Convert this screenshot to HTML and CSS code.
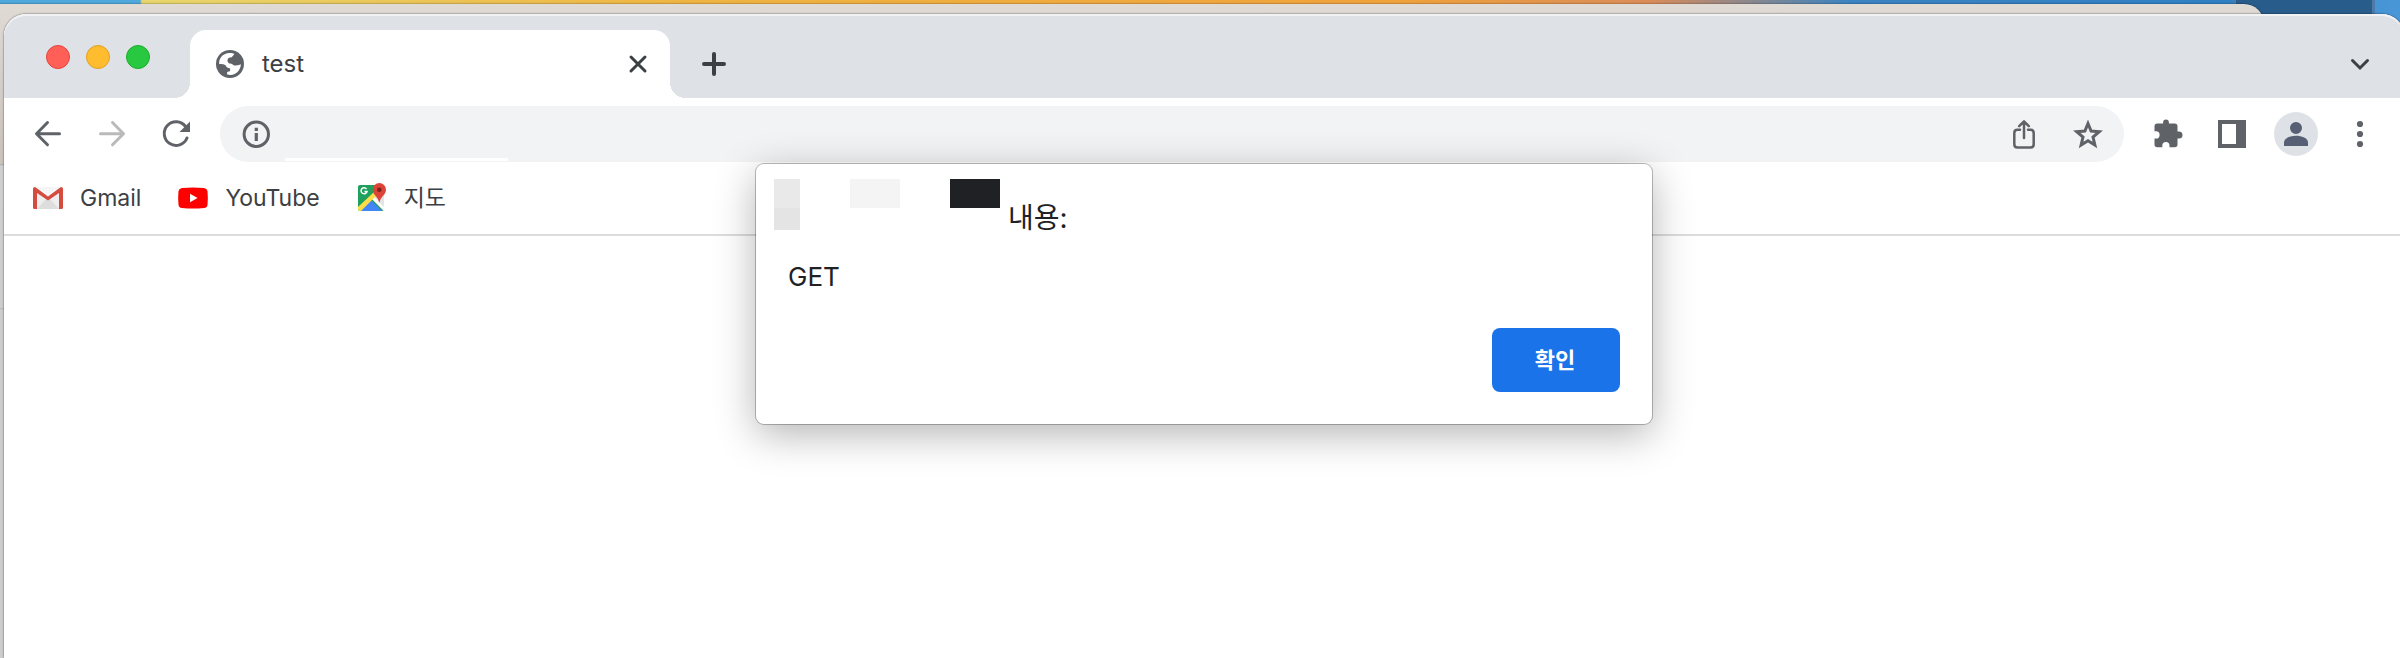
FILE: index.html
```html
<!DOCTYPE html>
<html lang="ko">
<head>
<meta charset="utf-8">
<title>test</title>
<link rel="stylesheet" href="styles.css">
</head>
<body>
<div class="desktop">
  <div class="dock-tile"></div>
  <div class="back-window"></div>
  <div class="window">
    <header class="tabstrip">
      <div class="lights">
        <button class="light red" aria-label="닫기"></button>
        <button class="light yellow" aria-label="최소화"></button>
        <button class="light green" aria-label="확대"></button>
      </div>
      <div class="tab">
        <svg class="globe" viewBox="0 0 28 28"><circle cx="14" cy="14" r="14" fill="#5f6368"/><path fill="#fff" d="M3.200 11.500C4.300 6.500 8.500 3.200 13 3.100C15 3 17 3.200 18.300 3.800C17.500 6 16 6.500 15.800 7.200C13 7.200 11.400 8.300 11.400 10.600C11.400 11.600 12.500 12 12.400 13C13.500 14 15 13 16.400 14.200C18.200 15.800 19 15.400 20 15.400C22 15.300 23.500 15 24.900 14.200C24.700 20 20.300 24.600 14.500 24.900C12.500 25 11.800 24.700 11 24.300L11.200 22.200C12 21.400 13.900 21.800 14.200 20.600C14.500 18.500 13.300 17.800 12 17.800C10.500 17.800 10.600 16.500 9.500 15.300C8.500 14.200 6.500 14.200 3.200 14Z"/></svg>
        <span class="tab-title">test</span>
        <button class="icon-btn" aria-label="탭 닫기"><svg viewBox="0 0 40 40" class="dark"><path d="M13 13 27 27M27 13 13 27" stroke-width="3"/></svg></button>
      </div>
      <button class="icon-btn new-tab" aria-label="새 탭"><svg viewBox="0 0 40 40" class="dark"><path d="M20 10V30M10 20H30" stroke-width="4"/></svg></button>
      <button class="icon-btn tab-search" aria-label="탭 검색"><svg viewBox="0 0 40 40" class="dark"><path d="M12.500 16.500 20 24 27.500 16.500" stroke-width="3"/></svg></button>
    </header>
    <nav class="toolbar">
      <button class="icon-btn" aria-label="뒤로"><svg viewBox="0 0 40 40" class="line"><path d="M31.500 19.700H9M19.500 8.500 8.500 19.700 19.500 30.800"/></svg></button>
      <button class="icon-btn" aria-label="앞으로"><svg viewBox="0 0 40 40" class="line faded"><path d="M8.500 19.700H31M20.500 8.500 31.500 19.700 20.500 30.800"/></svg></button>
      <button class="icon-btn" aria-label="새로고침"><svg viewBox="0 0 40 40" class="line"><path d="M29.500 12.500A11.800 11.800 0 1 0 31 24"/><path class="solid" d="M34 7.500V18H23.500Z"/></svg></button>
      <div class="omnibox">
        <button class="icon-btn" aria-label="사이트 정보"><svg viewBox="0 0 40 40" class="line"><circle cx="20.300" cy="20.300" r="12.200"/><path class="solid" d="M18.700 13.700h3.200v3.200h-3.200zM18.700 19h3.200v8h-3.200z"/></svg></button>
        <input class="address" type="text" aria-label="주소창">
        <button class="icon-btn" aria-label="공유"><svg viewBox="0 0 40 40" class="line share"><path d="M16 15.800H13.500Q10.300 15.800 10.300 19V30.200Q10.300 33.500 13.500 33.500H26.500Q29.700 33.500 29.700 30.200V19Q29.700 15.800 26.500 15.800H24M20 24V8M15.200 12.200 20 7.400 24.800 12.200"/></svg></button>
        <button class="icon-btn" aria-label="북마크 추가"><svg viewBox="0 0 40 40" class="line"><path class="miter" d="M20 9.500 23.100 17.100 31.200 17.700 25 23 26.900 31 20 26.700 13.100 31 15 23 8.800 17.700 16.900 17.100Z"/></svg></button>
        <span class="redaction"></span>
      </div>
      <button class="icon-btn" aria-label="확장 프로그램"><svg viewBox="0 0 40 40"><path class="solid" d="M31 17.500H29.500V12.300Q29.500 9.500 26.700 9.500H20.900V8.500A2.900 2.900 0 0 0 15.100 8.500V9.500H9.300Q6.500 9.500 6.500 12.300V17.300H8A3.600 3.600 0 0 1 8 24.500H6.500V30.500Q6.500 33.300 9.300 33.300H14.300V31.500A3.600 3.600 0 0 1 21.500 31.500V33.300H26.700Q29.500 33.300 29.500 30.500V24.500H31A3.500 3.500 0 0 0 31 17.500Z"/></svg></button>
      <button class="icon-btn" aria-label="측면 패널"><svg viewBox="0 0 40 40"><path class="solid" fill-rule="evenodd" d="M6 6H34V34H6ZM10 10V30H24V10Z"/></svg></button>
      <button class="icon-btn" aria-label="프로필"><svg viewBox="0 0 40 40"><circle cx="20" cy="20" r="22" fill="#dee1e6"/><path fill="#565f73" d="M20 8a6 6 0 0 1 0 12a6 6 0 0 1 0-12M8 32V28.500C8 24 14.500 21.800 20 21.800S32 24 32 28.500V32Z"/></svg></button>
      <button class="icon-btn" aria-label="메뉴"><svg viewBox="0 0 40 40"><g class="solid"><circle cx="20" cy="10" r="3.100"/><circle cx="20" cy="20" r="3.100"/><circle cx="20" cy="30" r="3.100"/></g></svg></button>
    </nav>
    <nav class="bookmarks">
      <a href="#"><svg viewBox="0 0 30 30"><path fill="#eee" d="M2 4H28V26H2Z"/><path fill="#ddd" d="M4 26 15 14 26 26Z"/><path fill="#f5f5f5" d="M3 4H27L15 14Z"/><path fill="#d54b3d" d="M0 6Q0 4 2 4L15 13.500 28 4Q30 4 30 6V24.500Q30 26 28.500 26H26V10L15 17.500 4 10V26H1.500Q0 26 0 24.500Z"/></svg>Gmail</a>
      <a href="#"><svg viewBox="0 0 30 30"><path fill="#f00" d="M4 5Q15 3.800 26 5Q29 5.300 29.500 8Q30.200 15 29.500 22Q29 24.800 26 25Q15 26.200 4 25Q1 24.800 .5 22Q-.2 15 .5 8Q1 5.300 4 5Z"/><path fill="#fff" d="M12 10.700 19.500 15 12 19.300Z"/></svg>YouTube</a>
      <a href="#"><svg viewBox="0 0 30 30"><rect x="1" y="2" width="26" height="26" rx="2" fill="#1fa05c"/><path fill="#e4e4e4" d="M27 28V6L14 15 27 28"/><path fill="#fff" d="M14 15 27 28V24L16 13Z"/><path fill="#4285f4" d="M3 28 14 17 25 28Z"/><path fill="#ffdc48" d="M1 24 17 9 20 12 4 28H3Q1 28 1 26Z"/><path d="M9.500 6A3 3 0 1 0 10 8.500H7.500" fill="none" stroke="#fff" stroke-width="1.500"/><path fill="#db4437" d="M22.300 0A6.700 6.700 0 0 1 29 6.700C29 12 23.500 13 22.300 20C21 13 15.700 12 15.700 6.700A6.700 6.700 0 0 1 22.300 0"/><circle cx="22.300" cy="6.700" r="2.300" fill="#7b231c"/></svg>지도</a>
    </nav>
    <main class="page"></main>
    <section class="alert" role="alertdialog" aria-labelledby="alert-title" aria-describedby="alert-text">
      <div class="alert-head">
        <div class="mask" aria-hidden="true"><i class="m1"></i><i class="m2"></i><i class="m3"></i></div>
        <h1 id="alert-title">내용:</h1>
      </div>
      <p id="alert-text">GET</p>
      <div class="actions"><button class="ok">확인</button></div>
    </section>
  </div>
</div>
</body>
</html>
```
FILE: styles.css
```css
* { box-sizing: border-box; }
html, body { height: 100%; margin: 0; }
body {
  font-family: Inter, "Noto Sans CJK KR", sans-serif;
  color: #3c4043;
  overflow: hidden;
}
button { border: 0; padding: 0; background: none; font: inherit; }
svg { display: block; overflow: visible; }

.desktop {
  position: relative;
  display: flex;
  height: 100%;
  padding: 14px 0 0 4px;
  overflow: hidden;
  background: linear-gradient(90deg, #4fa9dc 0, #4fa9dc 140px, #e8d66e 142px, #efb441 700px, #f0a23c 1400px, #d98c5a 1650px, #3b83c2 1850px, #2f80c4 2230px, #4a97d8 2400px);
}
.dock-tile {
  position: absolute;
  top: 0;
  right: 25px;
  width: 142px;
  height: 40px;
  background: #285d8b;
  border: solid #4b7ba6;
  border-width: 0 3px;
}
.back-window {
  position: absolute;
  top: 4px;
  left: -20px;
  right: 136px;
  bottom: 0;
  border-radius: 0 20px 0 0;
  background: linear-gradient(#dfdad4 0, #c9c2bb 160px, #aaa 160px, #d0d0d0 162px, #cdcdcd 304px, #b4b4b4 304px, #cdcdcd 306px);
  box-shadow: 0 0 2px rgba(0, 0, 0, .6);
}
.window {
  position: relative;
  flex: 1;
  display: flex;
  flex-direction: column;
  margin-right: -4px;
  border-radius: 22px 22px 0 0;
  background: #fff;
  box-shadow: 0 0 2px rgba(0, 0, 0, .7);
}

.tabstrip {
  display: flex;
  align-items: flex-end;
  padding: 16px 24px 0;
  border-radius: 22px 22px 0 0;
  background: #dee1e6;
  box-shadow: inset 0 2px 0 #f0f2f4;
}
.lights {
  display: flex;
  gap: 16px;
  width: 162px;
  padding-left: 18px;
  align-self: flex-start;
  margin-top: 15px;
}
.light { width: 24px; height: 24px; border-radius: 50%; border: 1px solid; }
.red { background: #ff5f57; border-color: #e2463f; }
.yellow { background: #febc2e; border-color: #e0a123; }
.green { background: #28c840; border-color: #1dad2b; }
.tab {
  position: relative;
  display: flex;
  align-items: center;
  width: 480px;
  height: 68px;
  padding: 0 12px 0 26px;
  border-radius: 16px 16px 0 0;
  background: #fff;
}
.tab::before, .tab::after {
  content: "";
  position: absolute;
  bottom: 0;
  width: 16px;
  height: 16px;
}
.tab::before { right: 100%; background: radial-gradient(circle at 0 0, transparent 16px, #fff 16px); }
.tab::after { left: 100%; background: radial-gradient(circle at 100% 0, transparent 16px, #fff 16px); }
.globe { width: 28px; height: 28px; margin-right: 18px; }
.tab-title { flex: 1; font-size: 24px; line-height: 28px; }
.icon-btn { flex: none; width: 40px; height: 40px; color: #5f6368; }
.icon-btn svg { width: 40px; height: 40px; }
.new-tab { margin: 0 0 14px 24px; }
.tab-search { margin: 0 0 14px auto; }
.dark { fill: none; stroke: #3c4043; stroke-linecap: round; }
.line { fill: none; stroke: #5f6368; stroke-width: 3; stroke-linecap: round; stroke-linejoin: round; }
.share { stroke-width: 2.5; }
.faded { stroke: #bababa; }
.miter { stroke-linejoin: miter; }
.solid { fill: #5f6368; stroke: none; }

.toolbar {
  display: flex;
  align-items: center;
  gap: 24px;
  padding: 8px 24px 0;
}
.omnibox {
  position: relative;
  flex: 1;
  display: flex;
  align-items: center;
  gap: 24px;
  height: 56px;
  padding: 0 16px;
  border-radius: 28px;
  background: #f1f3f4;
}
.address {
  flex: 1;
  min-width: 0;
  border: 0;
  outline: 0;
  background: none;
  font: inherit;
  font-size: 26px;
}
.redaction {
  position: absolute;
  left: 65px;
  bottom: 1px;
  width: 223px;
  height: 3px;
  background: #fff;
}

.bookmarks {
  display: flex;
  align-items: center;
  gap: 37px;
  height: 74px;
  padding: 0 29px;
  border-bottom: 2px solid #dadcdd;
}
.bookmarks a {
  display: flex;
  align-items: center;
  gap: 17px;
  color: inherit;
  font-size: 23px;
  line-height: 28px;
  text-decoration: none;
}
.bookmarks svg { width: 30px; height: 30px; }
.page { flex: 1; }

.alert {
  position: absolute;
  top: 150px;
  left: 50%;
  width: 896px;
  max-width: 90%;
  padding: 15px 32px 32px;
  transform: translateX(-50%);
  border-radius: 8px;
  background: #fff;
  color: #202124;
  box-shadow: 0 0 0 1px rgba(0, 0, 0, .25), 0 10px 40px rgba(0, 0, 0, .3);
}
.alert-head { display: flex; align-items: flex-end; gap: 8px; margin-left: -14px; }
.mask { display: flex; gap: 50px; align-items: flex-start; height: 51px; }
.mask i { width: 50px; height: 29px; }
.mask .m1 { width: 26px; height: 51px; background: linear-gradient(#e9e9e9 29px, #e4e4e4 29px); }
.mask .m2 { background: #f4f4f4; }
.mask .m3 { background: #202124; }
.alert h1 { margin: 0; font-size: 28px; line-height: 24px; font-weight: 400; }
.alert p { margin: 31px 0 35px; font-size: 26px; line-height: 32px; }
.actions { display: flex; justify-content: flex-end; }
.ok {
  width: 128px;
  height: 64px;
  padding: 0 2px 4px 0;
  border-radius: 8px;
  background: #1a73e8;
  color: #fff;
  font-size: 22px;
  font-weight: 600;
}
```
